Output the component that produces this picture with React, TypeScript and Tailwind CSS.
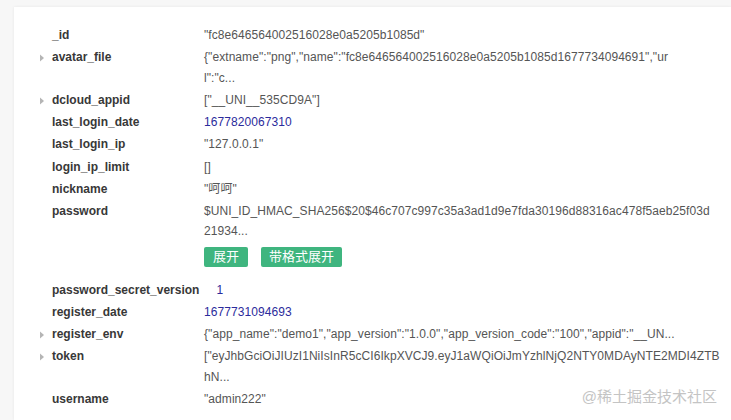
import React from "react";

const FONT = '"Liberation Sans", "Noto Sans CJK SC", sans-serif';

type Row = {
  k: string;
  lines: string[];
  arrow?: boolean;
  num?: boolean;
  buttons?: boolean;
};

const rows: Row[] = [
  { k: "_id", lines: ['"fc8e646564002516028e0a5205b1085d"'] },
  {
    k: "avatar_file",
    arrow: true,
    lines: [
      '{"extname":"png","name":"fc8e646564002516028e0a5205b1085d1677734094691","ur',
      'l":"c...',
    ],
  },
  { k: "dcloud_appid", arrow: true, lines: ['["__UNI__535CD9A"]'] },
  { k: "last_login_date", num: true, lines: ["1677820067310"] },
  { k: "last_login_ip", lines: ['"127.0.0.1"'] },
  { k: "login_ip_limit", lines: ["[]"] },
  { k: "nickname", lines: ['"呵呵"'] },
  {
    k: "password",
    buttons: true,
    lines: [
      "$UNI_ID_HMAC_SHA256$20$46c707c997c35a3ad1d9e7fda30196d88316ac478f5aeb25f03d",
      "21934...",
    ],
  },
  { k: "password_secret_version", num: true, lines: ["1"] },
  { k: "register_date", num: true, lines: ["1677731094693"] },
  {
    k: "register_env",
    arrow: true,
    lines: [
      '{"app_name":"demo1","app_version":"1.0.0","app_version_code":"100","appid":"__UN...',
    ],
  },
  {
    k: "token",
    arrow: true,
    lines: [
      '["eyJhbGciOiJIUzI1NiIsInR5cCI6IkpXVCJ9.eyJ1aWQiOiJmYzhlNjQ2NTY0MDAyNTE2MDI4ZTB',
      "hN...",
    ],
  },
  { k: "username", lines: ['"admin222"'] },
];

function Arrow() {
  return (
    <svg width="6" height="8" viewBox="0 0 6 8" className="absolute left-[-13px] top-[7px]">
      <path d="M1 0.5 L5 4 L1 7.5 Z" fill="#b5b5b5" />
    </svg>
  );
}

export default function App() {
  return (
    <div
      className="h-[420px] w-[731px] overflow-hidden bg-[#f7f7f7] pl-[14px] pt-[7px]"
      style={{ fontFamily: FONT }}
    >
      <div className="relative h-[413px] bg-white pl-[38px] pt-[17px] shadow-[0_0_3px_rgba(0,0,0,0.07)]">
        <div className="flex flex-col">
          {rows.map((r) => (
            <div key={r.k} className="flex py-[1px] text-[12px] leading-[20.25px]">
              <div className="relative min-w-[152px] pr-[17px] font-bold text-[#383838]">
                {r.arrow && <Arrow />}
                {r.k}
              </div>
              <div
                className={
                  "tracking-[0.07px] " + (r.num ? "text-[#2b2b9c]" : "text-[#555]")
                }
              >
                {r.lines.map((l, i) => (
                  <div key={i} className="whitespace-nowrap">
                    {l}
                  </div>
                ))}
                {r.buttons && (
                  <div className="mb-[11px] mt-[5px] flex gap-[13px] tracking-normal">
                    <button className="h-[20px] w-[44px] rounded-[2px] bg-[#3fb57f] text-[13px] leading-[20px] text-white">
                      展开
                    </button>
                    <button className="h-[20px] w-[81px] rounded-[2px] bg-[#3fb57f] text-[13px] leading-[20px] text-white">
                      带格式展开
                    </button>
                  </div>
                )}
              </div>
            </div>
          ))}
        </div>
        <div className="absolute bottom-[12px] right-[14px] text-[15px] text-[#c4c4c4]">
          @稀土掘金技术社区
        </div>
      </div>
    </div>
  );
}
